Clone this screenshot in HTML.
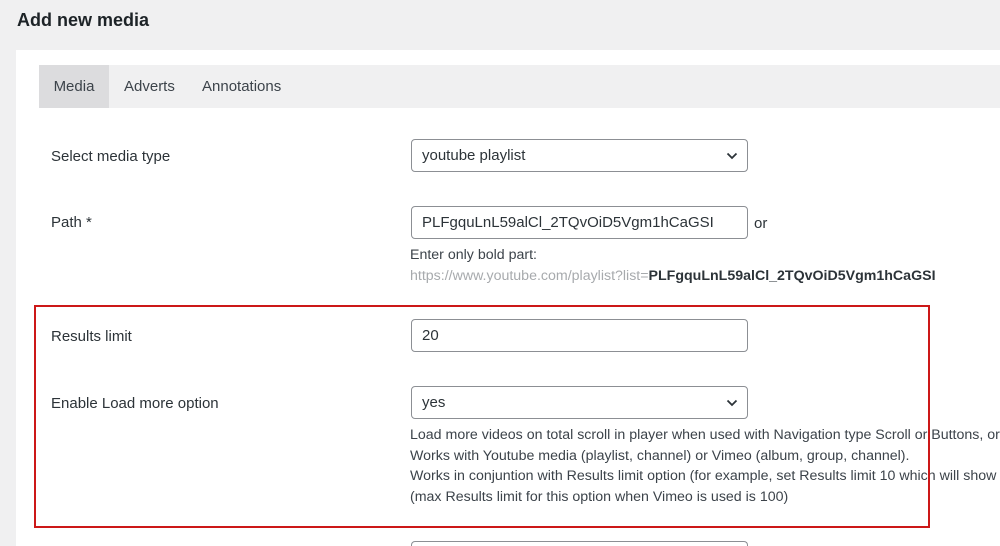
<!DOCTYPE html>
<html style="width:1000px;height:546px;overflow:hidden"><head><style>
*{box-sizing:border-box;margin:0;padding:0}
body{width:1000px;height:546px;overflow:hidden;background:#f0f0f1;font-family:"Liberation Sans",sans-serif;color:#1d2327;position:relative}
.abs{position:absolute}
h1{position:absolute;left:17px;top:10px;font-size:18px;font-weight:bold;color:#1d2327}
.panel{left:16px;top:50px;width:984px;height:496px;background:#fff}
.tabs{left:39px;top:65px;width:961px;height:43px;background:#f0f0f1}
.tab{position:absolute;top:0;height:43px;line-height:44px;font-size:15px;color:#3c434a}
.lbl{position:absolute;left:51px;font-size:15px;color:#2c3338}
.inp{position:absolute;left:411px;width:337px;height:33px;border:1px solid #8c8f94;border-radius:4px;font-size:15px;line-height:32px;padding-left:10px;color:#2c3338;background:#fff}
.chev{position:absolute;right:9px;top:11px}
.help{position:absolute;left:410px;font-size:14.2px;line-height:20.5px;color:#3c434a;white-space:nowrap}
.red{left:34px;top:305px;width:896px;height:223px;border:2px solid #cc1818}
</style></head><body>
<h1>Add new media</h1>
<div class="abs panel"></div>
<div class="abs tabs">
 <div class="tab" style="left:0;width:70px;background:#dcdcde;text-align:center">Media</div>
 <div class="tab" style="left:85px">Adverts</div>
 <div class="tab" style="left:163px">Annotations</div>
</div>
<div class="lbl" style="top:148px">Select media type</div>
<div class="inp" style="top:139px">youtube playlist<svg class="chev" width="12" height="10" viewBox="0 0 12 10"><path d="M1.5 2.5 6 7 10.5 2.5" fill="none" stroke="#2c3338" stroke-width="1.8"/></svg></div>
<div class="lbl" style="top:214px">Path *</div>
<div class="inp" style="top:206px">PLFgquLnL59alCl_2TQvOiD5Vgm1hCaGSI</div>
<div class="abs" style="left:754px;top:215px;font-size:15px;color:#2c3338">or</div>
<div class="help" style="top:245px">Enter only bold part:<br><span style="color:#a7aaad">https://www.youtube.com/playlist?list=</span><b style="color:#2c3338">PLFgquLnL59alCl_2TQvOiD5Vgm1hCaGSI</b></div>
<div class="lbl" style="top:328px">Results limit</div>
<div class="inp" style="top:319px">20</div>
<div class="lbl" style="top:395px">Enable Load more option</div>
<div class="inp" style="top:386px">yes<svg class="chev" width="12" height="10" viewBox="0 0 12 10"><path d="M1.5 2.5 6 7 10.5 2.5" fill="none" stroke="#2c3338" stroke-width="1.8"/></svg></div>
<div class="help" style="top:425px">Load more videos on total scroll in player when used with Navigation type Scroll or Buttons, or<br>Works with Youtube media (playlist, channel) or Vimeo (album, group, channel).<br>Works in conjuntion with Results limit option (for example, set Results limit 10 which will show<br>(max Results limit for this option when Vimeo is used is 100)</div>
<div class="abs red"></div>
<div class="inp" style="top:541px;height:5px;border-bottom:none;border-radius:4px 4px 0 0"></div>
</body></html>
